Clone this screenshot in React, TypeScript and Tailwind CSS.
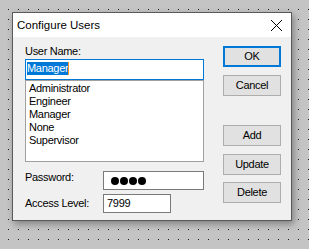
import React from 'react';

const users = ['Administrator', 'Engineer', 'Manager', 'None', 'Supervisor'];

const DialogButton: React.FC<{ label: string; isDefault?: boolean; className?: string }> = ({
  label,
  isDefault = false,
  className = '',
}) => (
  <button
    type="button"
    className={`flex h-[21px] w-[58px] items-center justify-center bg-[#e1e1e1] leading-[13px] ${
      isDefault ? 'border-2 border-[#0078d7]' : 'border border-[#adadad]'
    } ${className}`}
  >
    {label}
  </button>
);

export default function App() {
  return (
    <div className="h-[249px] w-[309px] overflow-hidden bg-[#c4c4c4] pl-[12px] pt-[12px] [background-image:radial-gradient(circle_at_8.5px_9.5px,#1a1a1a_0.6px,transparent_0.9px)] [background-size:10px_10px]">
      {/* Dialog window */}
      <div
        className="h-[209px] w-[280px] border border-[#5a5a5a] bg-[#f0f0f0] text-[11px] tracking-[-0.3px] text-black shadow-[2px_3px_7px_rgba(0,0,0,0.35)]"
        style={{ fontFamily: '"Liberation Sans", Arial, sans-serif' }}
      >
        {/* Title bar */}
        <div className="flex h-[24px] items-center justify-between bg-white pl-[4px] pr-[9px]">
          <span className="text-[11.5px] leading-[14px] tracking-normal">Configure Users</span>
          <svg width="11" height="11" viewBox="0 0 11 11" className="block">
            <path d="M0 0 L11 11 M11 0 L0 11" stroke="#000" strokeWidth="1" fill="none" />
          </svg>
        </div>

        {/* Body */}
        <div className="flex px-[12px] pt-[8px]">
          <div className="flex w-[179px] flex-col">
            <label className="h-[13px] leading-[13px]">User Name:</label>
            <div className="mt-[1px] flex h-[21px] items-start border border-[#0078d7] bg-white pl-[1px] pt-[2px]">
              <span className="h-[13px] bg-[#0078d7] leading-[13px] text-white">Manager</span>
              <span className="h-[13px] w-[1px] bg-[#f7931e]" />
            </div>
            <div className="h-[82px] border border-[#a0a0a0] bg-white pl-[3px] pt-[1px]">
              {users.map((u) => (
                <div key={u} className="h-[13px] leading-[13px]">
                  {u}
                </div>
              ))}
            </div>

            <div className="mt-[9px] flex items-start">
              <span className="w-[78px] leading-[13px]">Password:</span>
              <div className="flex h-[19px] w-[101px] items-center gap-[1px] border border-[#7a7a7a] bg-white pl-[7px]">
                <span className="h-[8px] w-[8px] rounded-full bg-black" />
                <span className="h-[8px] w-[8px] rounded-full bg-black" />
                <span className="h-[8px] w-[8px] rounded-full bg-black" />
                <span className="h-[8px] w-[8px] rounded-full bg-black" />
              </div>
            </div>

            <div className="mt-[4px] flex items-start">
              <span className="mt-[3px] w-[78px] leading-[13px]">Access Level:</span>
              <div className="flex h-[19px] w-[68px] items-center border border-[#7a7a7a] bg-white pl-[3px] leading-[13px]">
                7999
              </div>
            </div>
          </div>

          <div className="ml-[19px] flex flex-col pt-[1px]">
            <DialogButton label="OK" isDefault />
            <DialogButton label="Cancel" className="mt-[8px]" />
            <DialogButton label="Add" className="mt-[29px]" />
            <DialogButton label="Update" className="mt-[8px]" />
            <DialogButton label="Delete" className="mt-[7px]" />
          </div>
        </div>
      </div>
    </div>
  );
}
